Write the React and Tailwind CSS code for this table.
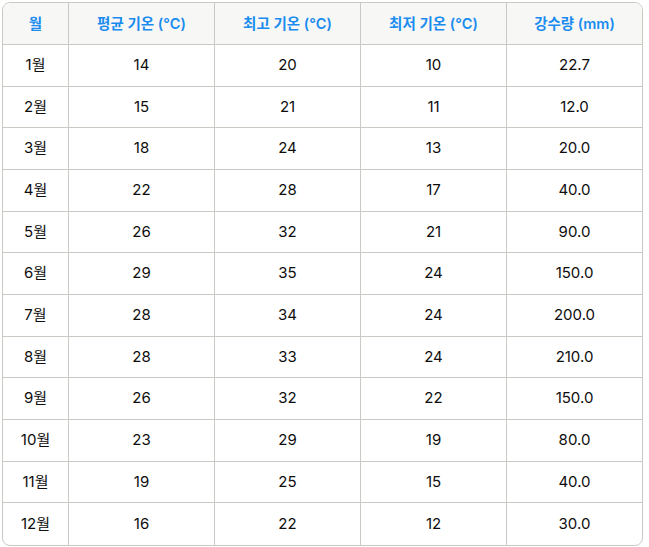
import React from 'react';

const headers = ['월', '평균 기온 (°C)', '최고 기온 (°C)', '최저 기온 (°C)', '강수량 (mm)'];

const rows = [
  ['1월', '14', '20', '10', '22.7'],
  ['2월', '15', '21', '11', '12.0'],
  ['3월', '18', '24', '13', '20.0'],
  ['4월', '22', '28', '17', '40.0'],
  ['5월', '26', '32', '21', '90.0'],
  ['6월', '29', '35', '24', '150.0'],
  ['7월', '28', '34', '24', '200.0'],
  ['8월', '28', '33', '24', '210.0'],
  ['9월', '26', '32', '22', '150.0'],
  ['10월', '23', '29', '19', '80.0'],
  ['11월', '19', '25', '15', '40.0'],
  ['12월', '16', '22', '12', '30.0'],
];

const cols = 'grid grid-cols-[66px_146px_146px_146px_135px]';

const App = () => {
  return (
    <div className="bg-white min-h-screen pt-[2px] pl-[2px] font-['Inter','Noto_Sans_CJK_KR',sans-serif]">
      <div className="w-[641px] border border-[#cbc9c3] rounded-lg overflow-hidden">
        <div className={`${cols} bg-[#f7f7f5] h-[42px] border-b border-[#cbc9c3]`}>
          {headers.map((h, i) => (
            <div
              key={h}
              className={`flex items-center justify-center text-[14.5px] font-semibold text-[#1a8cf0] ${i < 4 ? 'border-r border-[#cbc9c3]' : ''}`}
            >
              {h}
            </div>
          ))}
        </div>
        {rows.map((r, ri) => (
          <div
            key={r[0]}
            className={`${cols} h-[41.67px] ${ri < rows.length - 1 ? 'border-b border-[#cbc9c3]' : ''}`}
          >
            {r.map((c, i) => (
              <div
                key={i}
                className={`flex items-center justify-center text-[15px] text-[#0d0d0d] ${i < 4 ? 'border-r border-[#cbc9c3]' : ''}`}
              >
                {c}
              </div>
            ))}
          </div>
        ))}
      </div>
    </div>
  );
};

export default App;
